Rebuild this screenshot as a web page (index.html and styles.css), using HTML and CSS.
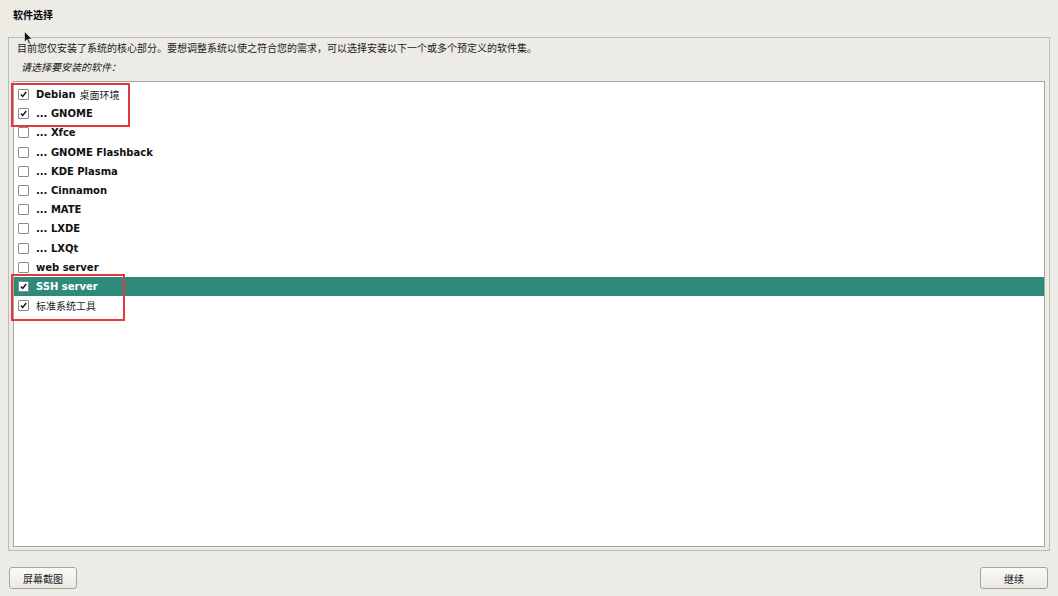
FILE: index.html
```html
<!DOCTYPE html>
<html lang="zh-CN">
<head>
<meta charset="utf-8">
<title>软件选择</title>
<link rel="stylesheet" href="styles.css">
</head>
<body>
<div class="page">
  <header class="header">软件选择</header>
  <section class="panel">
    <p class="desc">目前您仅安装了系统的核心部分。要想调整系统以使之符合您的需求，可以选择安装以下一个或多个预定义的软件集。</p>
    <p class="prompt">请选择要安装的软件：</p>
    <ul class="list">
      <li class="row"><span class="cb on"><svg viewBox="0 0 11 11"><path d="M2.2 5.6 L4.5 8 L8.8 2.4"/></svg></span><b>Debian</b><span class="cjk">桌面环境</span></li>
      <li class="row"><span class="cb on"><svg viewBox="0 0 11 11"><path d="M2.2 5.6 L4.5 8 L8.8 2.4"/></svg></span><b>... GNOME</b></li>
      <li class="row"><span class="cb"></span><b>... Xfce</b></li>
      <li class="row"><span class="cb"></span><b>... GNOME Flashback</b></li>
      <li class="row"><span class="cb"></span><b>... KDE Plasma</b></li>
      <li class="row"><span class="cb"></span><b>... Cinnamon</b></li>
      <li class="row"><span class="cb"></span><b>... MATE</b></li>
      <li class="row"><span class="cb"></span><b>... LXDE</b></li>
      <li class="row"><span class="cb"></span><b>... LXQt</b></li>
      <li class="row"><span class="cb"></span><b>web server</b></li>
      <li class="row selected"><span class="cb on"><svg viewBox="0 0 11 11"><path d="M2.2 5.6 L4.5 8 L8.8 2.4"/></svg></span><b>SSH server</b></li>
      <li class="row"><span class="cb on"><svg viewBox="0 0 11 11"><path d="M2.2 5.6 L4.5 8 L8.8 2.4"/></svg></span><span class="plain">标准系统工具</span></li>
    </ul>
  </section>
  <footer class="footer">
    <button class="btn">屏幕截图</button>
    <button class="btn">继续</button>
  </footer>
  <div class="mark mark-a"></div>
  <div class="mark mark-b"></div>
  <svg class="cursor" viewBox="0 0 9 14"><path d="M0.5 0.5 L0.5 11 L3 8.6 L4.8 12.8 L6.3 12.1 L4.6 8.1 L7.9 8.1 Z"/></svg>
</div>
</body>
</html>
```

FILE: styles.css
```css
* { box-sizing: border-box; }
html, body { margin: 0; padding: 0; }
body {
  background: #edebe5;
  font-family: "DejaVu Sans", "Noto Sans CJK SC", sans-serif;
  font-size: 10px;
  color: #1a1a1a;
}
.page {
  position: relative;
  width: 1058px;
  height: 596px;
  display: flex;
  flex-direction: column;
}
.header {
  height: 37px;
  padding: 10px 0 0 13px;
  font-weight: bold;
  line-height: 12px;
  font-size: 10px;
  color: #000000;
}
.panel {
  margin: 0 8px;
  height: 514px;
  border: 1px solid #bdbab3;
  display: flex;
  flex-direction: column;
  padding: 5px 4px 3px 4px;
}
.desc {
  margin: 0;
  padding-left: 4px;
  line-height: 12px;
  font-size: 10px;
}
.prompt {
  margin: 7px 0 0 0;
  padding-left: 8px;
  line-height: 12px;
  font-style: italic;
  font-size: 10px;
}
.list {
  list-style: none;
  margin: 7px 0 0 0;
  padding: 3px 0 0 0;
  flex: 1;
  background: #ffffff;
  border: 1px solid #a9a6a0;
}
.row {
  height: 19.2px;
  display: flex;
  align-items: center;
  padding-left: 4px;
  gap: 7px;
}
.row b { font-weight: bold; font-size: 10px; color: #111111; }
.row .cjk { margin-left: -3px; font-size: 10px; }
.row .plain { font-size: 10px; }
.row.selected {
  background: #2f8a7b;
}
.row.selected b { color: #ffffff; }
.cb {
  width: 11px;
  height: 11px;
  border: 1px solid #8e8c87;
  border-radius: 1px;
  background: #ffffff;
  flex: none;
  display: flex;
}
.cb svg { width: 9px; height: 9px; }
.cb path {
  fill: none;
  stroke: #111111;
  stroke-width: 1.7;
}
.footer {
  display: flex;
  justify-content: space-between;
  padding: 16px 10px 0 9px;
}
.btn {
  width: 68px;
  height: 22px;
  border: 1px solid #a7a49e;
  border-radius: 3px;
  background: linear-gradient(#fbfaf8, #ebe9e4);
  font-family: "DejaVu Sans", "Noto Sans CJK SC", sans-serif;
  font-size: 10px;
  color: #222222;
  padding: 0;
}
.mark {
  position: absolute;
  border: 2px solid #e03a3f;
}
.mark-a { left: 11px; top: 83px; width: 119px; height: 44px; }
.mark-b { left: 11px; top: 274px; width: 114px; height: 47px; }
.cursor {
  position: absolute;
  left: 24px;
  top: 31px;
  width: 9px;
  height: 14px;
}
.cursor path { fill: #111111; stroke: #ffffff; stroke-width: 0.6; }
```
